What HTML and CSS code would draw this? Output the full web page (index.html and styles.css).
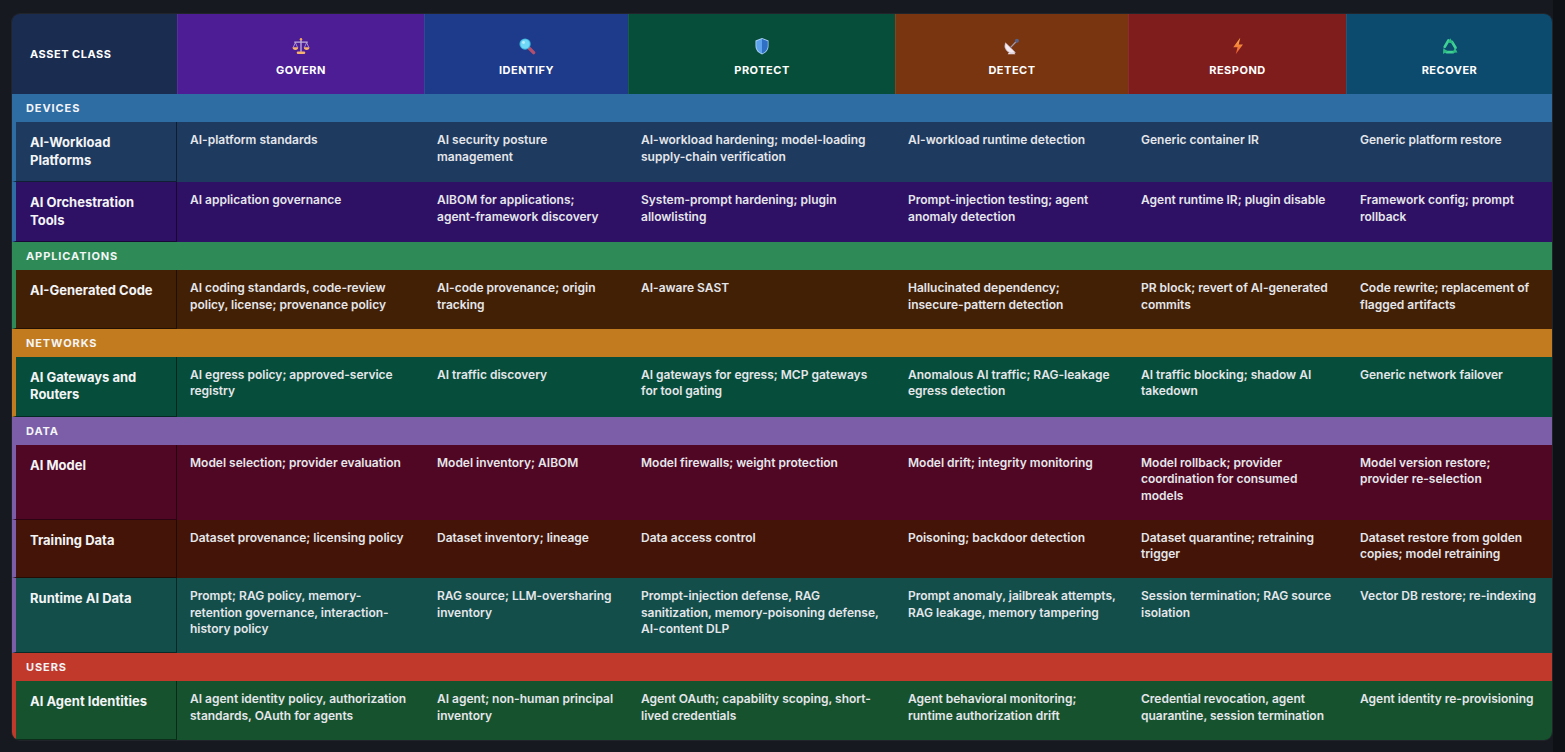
FILE: index.html
```html
<!DOCTYPE html>
<html lang="en">
<head>
<meta charset="utf-8">
<title>AI Asset Class × CSF Functions</title>
<link rel="stylesheet" href="styles.css">
</head>
<body>
<div class="matrix">
  <div class="row head">
    <div class="hcell asset-h">ASSET CLASS</div>
    <div class="hcell govern">
      <span class="icon"><svg viewBox="0 0 16 16" width="18" height="18"><rect x="7.35" y="2.2" width="1.3" height="11" fill="#b7a3d6"/><circle cx="8" cy="1.9" r="1.1" fill="#f2a65a"/><rect x="1.8" y="3.9" width="12.4" height="1.2" rx=".6" fill="#c0b0dc"/><path d="M3 5 L1.1 9.2 M3 5 L4.9 9.2 M13 5 L11.1 9.2 M13 5 L14.9 9.2" stroke="#d2c4ea" stroke-width=".6"/><path d="M0.5 9.2 H5.5 A2.5 2.3 0 0 1 0.5 9.2 Z M10.5 9.2 H15.5 A2.5 2.3 0 0 1 10.5 9.2 Z" fill="#f7b36b"/><rect x="4.2" y="12.8" width="7.6" height="2.2" rx="1.1" fill="#f7b36b"/></svg></span>
      <span class="hlabel">GOVERN</span>
    </div>
    <div class="hcell identify">
      <span class="icon"><svg viewBox="0 0 16 16" width="18" height="18"><path d="M9.8 9.8 L13.9 13.9" stroke="#b24f6e" stroke-width="3" stroke-linecap="round"/><circle cx="6.3" cy="6.3" r="5" fill="#3fb2dc"/><circle cx="6.3" cy="6.3" r="4.1" fill="#6fd8f6"/><circle cx="4.9" cy="4.9" r="1.3" fill="#b8efff"/></svg></span>
      <span class="hlabel">IDENTIFY</span>
    </div>
    <div class="hcell protect">
      <span class="icon"><svg viewBox="0 0 16 16" width="18" height="18"><path d="M8 0.8 L13.8 3 V8 C13.8 11.7 11.3 14.1 8 15.5 C4.7 14.1 2.2 11.7 2.2 8 V3 Z" fill="#a8cff7"/><path d="M8 1.8 L13 3.7 V8 C13 11.2 10.9 13.3 8 14.6 C5.1 13.3 3 11.2 3 8 V3.7 Z" fill="#5ca2ec"/><path d="M8 1.8 L13 3.7 V8 C13 11.2 10.9 13.3 8 14.6 Z" fill="#2f6fc4"/></svg></span>
      <span class="hlabel">PROTECT</span>
    </div>
    <div class="hcell detect">
      <span class="icon"><svg viewBox="0 0 16 16" width="18" height="18"><path d="M4.2 15.4 L7.6 10.4 L11 15.4 Z" fill="#ece2ea"/><path d="M2.2 5.2 A6.6 6.6 0 0 0 11 13.8 Z" fill="#f4ecf2" stroke="#c8b6c4" stroke-width=".6"/><path d="M6.6 9.4 L11.8 4" stroke="#a09cb2" stroke-width="1.1"/><circle cx="12.4" cy="3.4" r="1.8" fill="#56618a"/></svg></span>
      <span class="hlabel">DETECT</span>
    </div>
    <div class="hcell respond">
      <span class="icon"><svg viewBox="0 0 16 16" width="18" height="18"><defs><linearGradient id="bolt" x1="0" y1="0" x2="0" y2="1"><stop offset="0" stop-color="#ffb347"/><stop offset="1" stop-color="#e8532b"/></linearGradient></defs><path d="M10 0.6 L3.8 9 H7.6 L6 15.4 L12.4 6.6 H8.6 Z" fill="url(#bolt)"/></svg></span>
      <span class="hlabel">RESPOND</span>
    </div>
    <div class="hcell recover">
      <span class="icon"><svg viewBox="0 0 16 16" width="18" height="18"><g stroke="#3fd096" stroke-width="2.4" stroke-linecap="round" fill="none"><path d="M6.6 3.1 L3.3 8.8"/><path d="M5 13.5 H10.7"/><path d="M12.9 9.6 L9.8 4.3"/></g><g fill="#2cbc82"><path d="M8.3 1.2 L10.9 5.5 L6.1 5.1 Z"/><path d="M2 10 L1.8 15 L6.1 12.6 Z"/><path d="M14.6 13.7 L10.1 13.9 L12.5 9.4 Z"/></g></svg></span>
      <span class="hlabel">RECOVER</span>
    </div>
  </div>

  <div class="cat devices">DEVICES</div>
  <div class="row r-workload">
    <div class="acell c-devices">AI-Workload Platforms</div>
    <div class="cell gv">AI-platform standards</div>
    <div class="cell id">AI security posture management</div>
    <div class="cell pr">AI-workload hardening; model-loading supply-chain verification</div>
    <div class="cell de">AI-workload runtime detection</div>
    <div class="cell rs">Generic container IR</div>
    <div class="cell rc">Generic platform restore</div>
  </div>
  <div class="row r-orch">
    <div class="acell c-devices">AI Orchestration Tools</div>
    <div class="cell gv">AI application governance</div>
    <div class="cell id">AIBOM for applications; agent-framework discovery</div>
    <div class="cell pr">System-prompt hardening; plugin allowlisting</div>
    <div class="cell de">Prompt-injection testing; agent anomaly detection</div>
    <div class="cell rs">Agent runtime IR; plugin disable</div>
    <div class="cell rc">Framework config; prompt rollback</div>
  </div>

  <div class="cat applications">APPLICATIONS</div>
  <div class="row r-code">
    <div class="acell c-applications">AI-Generated Code</div>
    <div class="cell gv">AI coding standards, code-review policy, license; provenance policy</div>
    <div class="cell id">AI-code provenance; origin tracking</div>
    <div class="cell pr">AI-aware SAST</div>
    <div class="cell de">Hallucinated dependency; insecure-pattern detection</div>
    <div class="cell rs">PR block; revert of AI-generated commits</div>
    <div class="cell rc">Code rewrite; replacement of flagged artifacts</div>
  </div>

  <div class="cat networks">NETWORKS</div>
  <div class="row r-gateways">
    <div class="acell c-networks">AI Gateways and Routers</div>
    <div class="cell gv">AI egress policy; approved-service registry</div>
    <div class="cell id">AI traffic discovery</div>
    <div class="cell pr">AI gateways for egress; MCP gateways for tool gating</div>
    <div class="cell de">Anomalous AI traffic; RAG-leakage egress detection</div>
    <div class="cell rs">AI traffic blocking; shadow AI takedown</div>
    <div class="cell rc">Generic network failover</div>
  </div>

  <div class="cat data">DATA</div>
  <div class="row r-model">
    <div class="acell c-data">AI Model</div>
    <div class="cell gv">Model selection; provider evaluation</div>
    <div class="cell id">Model inventory; AIBOM</div>
    <div class="cell pr">Model firewalls; weight protection</div>
    <div class="cell de">Model drift; integrity monitoring</div>
    <div class="cell rs">Model rollback; provider coordination for consumed models</div>
    <div class="cell rc">Model version restore; provider re-selection</div>
  </div>
  <div class="row r-training">
    <div class="acell c-data">Training Data</div>
    <div class="cell gv">Dataset provenance; licensing policy</div>
    <div class="cell id">Dataset inventory; lineage</div>
    <div class="cell pr">Data access control</div>
    <div class="cell de">Poisoning; backdoor detection</div>
    <div class="cell rs">Dataset quarantine; retraining trigger</div>
    <div class="cell rc">Dataset restore from golden copies; model retraining</div>
  </div>
  <div class="row r-runtime">
    <div class="acell c-data">Runtime AI Data</div>
    <div class="cell gv">Prompt; RAG policy, memory-retention governance, interaction-history policy</div>
    <div class="cell id">RAG source; LLM-oversharing inventory</div>
    <div class="cell pr">Prompt-injection defense, RAG sanitization, memory-poisoning defense, AI-content DLP</div>
    <div class="cell de">Prompt anomaly, jailbreak attempts, RAG leakage, memory tampering</div>
    <div class="cell rs">Session termination; RAG source isolation</div>
    <div class="cell rc">Vector DB restore; re-indexing</div>
  </div>

  <div class="cat users">USERS</div>
  <div class="row r-agent">
    <div class="acell c-users">AI Agent Identities</div>
    <div class="cell gv">AI agent identity policy, authorization standards, OAuth for agents</div>
    <div class="cell id">AI agent; non-human principal inventory</div>
    <div class="cell pr">Agent OAuth; capability scoping, short-lived credentials</div>
    <div class="cell de">Agent behavioral monitoring; runtime authorization drift</div>
    <div class="cell rs">Credential revocation, agent quarantine, session termination</div>
    <div class="cell rc">Agent identity re-provisioning</div>
  </div>
</div>
</body>
</html>
```

FILE: styles.css
```css
html, body {
  margin: 0;
  padding: 0;
}

html {
  background: #161a20;
}

body {
  font-family: Inter, "Noto Sans", "Liberation Sans", sans-serif;
  color: #e6e8ec;
  width: 1565px;
  height: 752px;
  overflow: hidden;
  background: linear-gradient(to right, #161a20 0, #161a20 1553px, #0e1115 1553px, #0e1115 100%);
}

.matrix {
  margin: 14px 0 0 12px;
  width: 1540px;
  border-radius: 8px;
  overflow: hidden;
  box-shadow: 0 0 0 1px rgba(255, 255, 255, 0.05);
}

.row {
  display: grid;
  grid-template-columns: 165px 247px 204px 267px 233px 218px 206px;
}

/* header */
.head {
  height: 80px;
}

.hcell {
  display: flex;
  flex-direction: column;
  align-items: center;
  justify-content: center;
  gap: 8px;
  padding-top: 6px;
  border-left: 1px solid rgba(255, 255, 255, 0.08);
  font-size: 11px;
  font-weight: 700;
  letter-spacing: 0.5px;
  color: #ffffff;
  line-height: 14px;
}

.hcell.asset-h {
  align-items: flex-start;
  padding: 0 0 0 18px;
  border-left: none;
  background: #1a2c4f;
}

.icon {
  display: block;
  width: 18px;
  height: 18px;
}

.icon svg {
  display: block;
}

.govern { background: #4c1d95; }
.identify { background: #1e3a8a; }
.protect { background: #074e3a; }
.detect { background: #78350f; }
.respond { background: #7f1d1d; }
.recover { background: #0c4a6e; }

/* category rows */
.cat {
  height: 28px;
  display: flex;
  align-items: center;
  padding-left: 14px;
  font-size: 11px;
  font-weight: 700;
  letter-spacing: 0.9px;
  color: #f4f5f7;
}

.devices { background: #2e6ca4; }
.applications { background: #2e8b57; }
.networks { background: #c27c1f; }
.data { background: #7b5ea7; }
.users { background: #c0392b; }

/* data rows */
.acell {
  padding: 12px 10px 12px 14px;
  font-size: 13px;
  font-weight: 700;
  line-height: 17.5px;
  color: #f3f4f6;
  border-left: 4px solid transparent;
  border-right: 1px solid rgba(0, 0, 0, 0.5);
  border-bottom: 1px solid rgba(0, 0, 0, 0.45);
}

.c-devices { border-left-color: #2e6ca4; }
.c-applications { border-left-color: #2e8b57; }
.c-networks { border-left-color: #c27c1f; }
.c-data { border-left-color: #7b5ea7; }
.c-users { border-left-color: #c0392b; }

.cell {
  padding: 10px 14px 15.5px 13px;
  font-size: 12px;
  font-weight: 600;
  line-height: 16.5px;
  color: #e4e6ea;
}

.cell.id { padding-right: 14px; }
.cell.pr { padding-right: 14px; }
.cell.de { padding-right: 12px; }
.cell.rs { padding-right: 12px; }
.cell.rc { padding-left: 14px; padding-right: 14px; }

.r-workload { background: #1e3a5f; }
.r-orch { background: #2e1065; }
.r-code { background: #422006; }
.r-gateways { background: #064e3b; }
.r-model { background: #500724; }
.r-training { background: #431407; }
.r-runtime { background: #134e4a; }
.r-agent { background: #17522f; }
```
